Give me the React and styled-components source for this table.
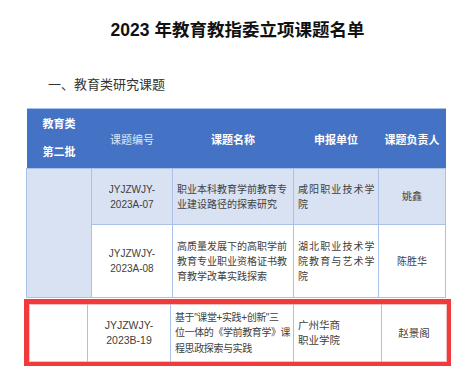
import React from "react";
import styled, { createGlobalStyle } from "styled-components";

const GlobalStyle = createGlobalStyle`
  body {
    margin: 0;
    background: #ffffff;
    font-family: "Liberation Sans", "Noto Sans CJK SC", sans-serif;
  }
`;

const rows = [
  {
    code: ["JYJZWJY-", "2023A-07"],
    name: ["职业本科教育学前教育专", "业建设路径的探索研究"],
    unit: ["咸阳职业技术学", "院"],
    owner: "姚鑫",
    shaded: true,
    height: 56,
  },
  {
    code: ["JYJZWJY-", "2023A-08"],
    name: ["高质量发展下的高职学前", "教育专业职业资格证书教", "育教学改革实践探索"],
    unit: ["湖北职业技术学", "院教育与艺术学", "院"],
    owner: "陈胜华",
    shaded: false,
    height: 73,
  },
];

const lines = (arr) =>
  arr.map((t, i) => (
    <React.Fragment key={i}>
      {i > 0 && <br />}
      {t}
    </React.Fragment>
  ));

export default function App() {
  return (
    <>
      <GlobalStyle />
      <Page>
        <Title>2023 年教育教指委立项课题名单</Title>
        <Section>一、教育类研究课题</Section>
        <Table>
          <colgroup>
            <col style={{ width: 65 }} />
            <col style={{ width: 81 }} />
            <col style={{ width: 121 }} />
            <col style={{ width: 85 }} />
            <col style={{ width: 67 }} />
          </colgroup>
          <thead>
            <HeadRow>
              <Th>
                <Batch>
                  <span>教育类</span>
                  <span>第二批</span>
                </Batch>
              </Th>
              <Th $light>课题编号</Th>
              <Th>课题名称</Th>
              <Th>申报单位</Th>
              <Th>课题负责人</Th>
            </HeadRow>
          </thead>
          <tbody>
            {rows.map((r, i) => (
              <Row key={i} $shaded={r.shaded} style={{ height: r.height }}>
                {i === 0 && <Td rowSpan={2} $shaded />}
                <Td $center>{lines(r.code)}</Td>
                <Td>{lines(r.name)}</Td>
                <Td $spaced>{lines(r.unit)}</Td>
                <Td $center>{r.owner}</Td>
              </Row>
            ))}
          </tbody>
        </Table>
        <Highlight>
          <InnerTable>
            <colgroup>
              <col style={{ width: 58 }} />
              <col style={{ width: 83 }} />
              <col style={{ width: 123 }} />
              <col style={{ width: 88 }} />
              <col style={{ width: 65 }} />
            </colgroup>
            <tbody>
              <tr>
                <HiTd />
                <HiTd $center>JYJZWJY-<br />2023B-19</HiTd>
                <HiTd $tall>
                  基于"课堂+实践+创新"三<br />位一体的《学前教育学》课<br />程思政探索与实践
                </HiTd>
                <HiTd>广州华商<br />职业学院</HiTd>
                <HiTd $center>赵景阁</HiTd>
              </tr>
            </tbody>
          </InnerTable>
        </Highlight>
      </Page>
    </>
  );
}

const Page = styled.div`
  width: 473px;
  height: 376px;
  overflow: hidden;
  padding-top: 20px;
  box-sizing: border-box;
`;

const Title = styled.h1`
  margin: 0;
  text-align: center;
  font-size: 17.5px;
  line-height: 20px;
  font-weight: 700;
  color: #111;
  padding-left: 2px;
`;

const Section = styled.h2`
  margin: 37px 0 0 48px;
  font-size: 13px;
  line-height: 16px;
  font-weight: 400;
  color: #333;
`;

const Table = styled.table`
  margin: 15px 0 0 26px;
  width: 419px;
  table-layout: fixed;
  border-collapse: collapse;
  border-top: 1px solid #a9c0ea;
`;

const HeadRow = styled.tr`
  height: 60px;
  background: #4472c4;
`;

const Th = styled.th`
  padding: 0;
  font-size: 11px;
  font-weight: ${(p) => (p.$light ? 400 : 700)};
  color: ${(p) => (p.$light ? "#dfe7f6" : "#ffffff")};
  text-align: center;
  vertical-align: middle;
  white-space: nowrap;
`;

const Batch = styled.div`
  display: flex;
  flex-direction: column;
  align-items: center;
  gap: 13px;
  line-height: 15px;
`;

const Row = styled.tr`
  background: ${(p) => (p.$shaded ? "#d9e2f3" : "#ffffff")};
`;

const Td = styled.td`
  padding: 0 0 0 4px;
  border: 1px solid #a9c0e8;
  background: ${(p) => (p.$shaded ? "#d9e2f3" : "transparent")};
  font-size: 10px;
  line-height: 15px;
  color: #404040;
  text-align: ${(p) => (p.$center ? "center" : "left")};
  letter-spacing: ${(p) => (p.$spaced ? "1.1px" : "0")};
  vertical-align: middle;
  white-space: nowrap;
  ${(p) => p.$center && "padding: 0;"}
`;

const Highlight = styled.div`
  margin: 1px 0 0 24px;
  width: 427px;
  box-sizing: border-box;
  border: 5px solid #f23a3c;
  border-bottom-width: 4px;
`;

const InnerTable = styled.table`
  width: 417px;
  height: 58px;
  table-layout: fixed;
  border-collapse: collapse;
  border: 1px solid #f4c0c0;
`;

const HiTd = styled.td`
  padding: 0 0 0 4px;
  border-left: 1px solid #a9c0e8;
  &:first-child {
    border-left: none;
  }
  font-size: ${(p) => (p.$tall ? "10px" : "10.5px")};
  line-height: ${(p) => (p.$tall ? "15.5px" : "15px")};
  letter-spacing: ${(p) => (p.$tall ? "-0.4px" : "0")};
  color: #404040;
  text-align: ${(p) => (p.$center ? "center" : "left")};
  vertical-align: middle;
  white-space: nowrap;
  overflow: hidden;
  ${(p) => p.$center && "padding: 0;"}
`;
